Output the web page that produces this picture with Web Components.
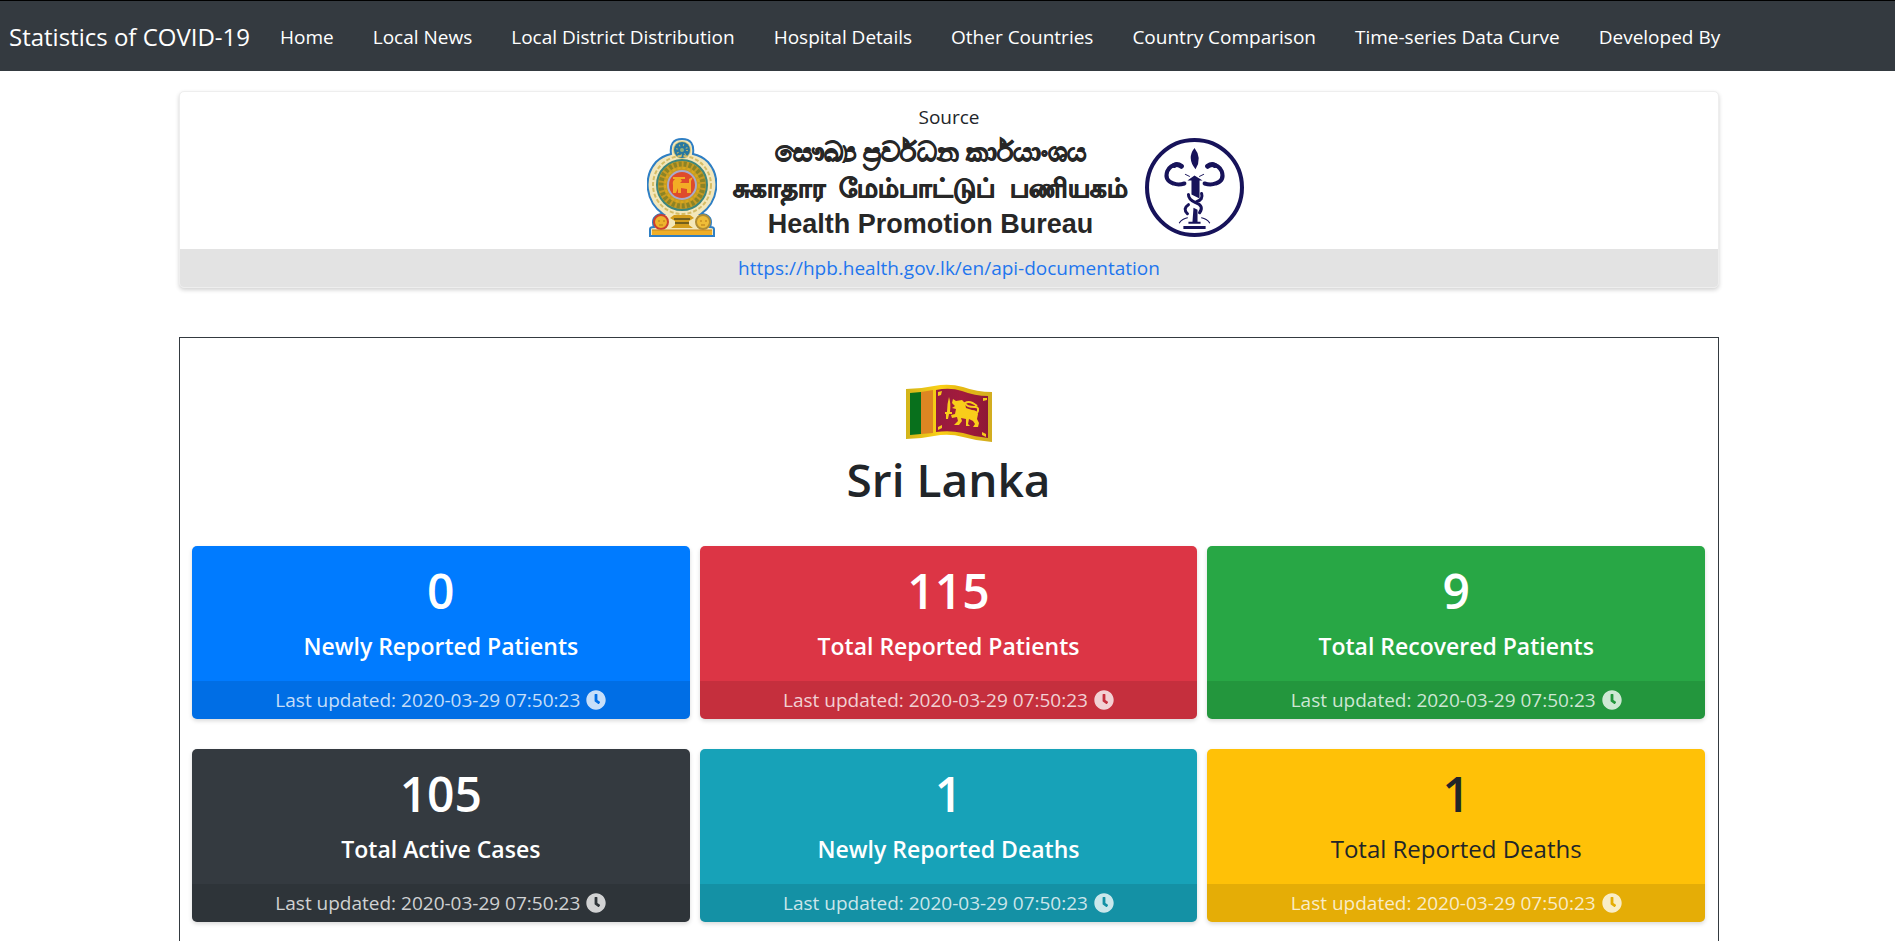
<!DOCTYPE html>
<html lang="en">
<head>
<meta charset="utf-8">
<meta name="viewport" content="width=device-width, initial-scale=1">
<title>Statistics of COVID-19</title>
<style>
  body { margin: 0; background: #fff; color: #212529; font: 19px/30px "Open Sans", "Noto Sans", sans-serif; }
</style>
</head>
<body>
<covid-page></covid-page>
<script>
const define = (name, html, setup) => {
  const template = document.createElement('template');
  template.innerHTML = html;
  customElements.define(name, class extends HTMLElement {
    constructor() {
      super();
      this.attachShadow({ mode: 'open' }).append(template.content.cloneNode(true));
    }
    connectedCallback() { if (setup) setup(this, this.shadowRoot); }
  });
};

define('nav-link', `
<style>
  :host { display: block; }
  a { color: #fff; text-decoration: none; white-space: nowrap; }
</style>
<a href="#"><slot></slot></a>`);

define('site-nav', `
<style>
  :host { display: block; background: #343a40; border-top: 1px solid #000; color: #fff; }
  nav { display: flex; align-items: center; gap: 30px; padding: 16px 9px 14px; }
  .brand { color: #fff; text-decoration: none; font-size: 24px; line-height: 40px; white-space: nowrap; }
  .links { display: flex; gap: 39px; }
</style>
<nav>
  <a class="brand" href="#"><slot name="brand"></slot></a>
  <div class="links"><slot></slot></div>
</nav>`);

define('state-emblem', `
<style>:host { display: block; } svg { display: block; }</style>
<svg width="70" height="99" viewBox="0 0 70 99" role="img" aria-label="Emblem of Sri Lanka">
  <g fill="#f3e7ba" stroke="#2f7fc4" stroke-width="2">
    <path d="M3 98V91Q3 89 7 89Q5 84 7 80Q10 76 16 76C-2 63-4 39 9 24Q15 18 24 16Q22 1 35 1Q48 1 46 16Q55 18 61 24C74 39 72 63 54 76Q60 76 63 80Q65 84 63 89Q67 89 67 91V98Z"/>
  </g>
  <circle cx="35" cy="12" r="9" fill="#d9c878"/>
  <circle cx="35" cy="12" r="8" fill="#2878a0"/>
  <circle cx="35" cy="12" r="5" fill="none" stroke="#b9b26a" stroke-width="2" stroke-dasharray="1 3"/>
  <circle cx="35" cy="12" r="2" fill="#8fae7c"/>
  <circle cx="35" cy="47" r="29" fill="none" stroke="#d6bd66" stroke-width="2" stroke-dasharray="4 2"/>
  <circle cx="35" cy="47" r="25" fill="#c79b24" stroke="#3d867c" stroke-width="2"/>
  <circle cx="35" cy="47" r="21" fill="none" stroke="#8c8425" stroke-width="5" stroke-dasharray="3 2"/>
  <circle cx="35" cy="47" r="17" fill="none" stroke="#d9a91b" stroke-width="2" stroke-dasharray="3 2"/>
  <circle cx="35" cy="47" r="14" fill="#df4b2b" stroke="#a8aacc" stroke-width="2"/>
  <path d="M26 55V47Q25 43 28 41L33 40 35 43 33 45 42 45V41L46 39 44 43V55H40V51L34 50V55H31V50L29 55ZM26 39H38V41H26Z" fill="#f3ad25"/>
  <path d="M27 77H43L47 80 42 83V87L46 90H24L28 87V83L23 80Z" fill="#d39d1c"/>
  <path d="M27 81H43M28 85H42" stroke="#73601d" stroke-width="2"/>
  <circle cx="14" cy="84" r="7" fill="#eeb32b" stroke="#cc3f30" stroke-width="2"/>
  <circle cx="56" cy="84" r="7" fill="#efbd38" stroke="#b08d35" stroke-width="2"/>
  <path d="M11 83h2m3 0h2M12 87h4M53 83h2m3 0h2M54 87h4" stroke="#b77917"/>
  <path d="M5 92H65V97H5Z" fill="#efae27"/>
  <path d="M5 92H65" stroke="#c48623"/>
</svg>`);

define('bureau-seal', `
<style>:host { display: block; } svg { display: block; }</style>
<svg width="99" height="99" viewBox="0 0 98 98" role="img" aria-label="Health Promotion Bureau seal">
  <circle cx="49" cy="49" r="47" fill="#fff" stroke="#17135a" stroke-width="4"/>
  <g fill="none" stroke="#17135a" stroke-linecap="round">
    <path d="M34 27Q26 25 22 33Q19 42 28 45Q33 47 39 45" stroke-width="4"/>
    <path d="M64 27Q72 25 76 33Q79 42 70 45Q65 47 59 45" stroke-width="4"/>
    <path d="M29 27Q32 25 36 28M69 27Q66 25 62 28" stroke-width="5"/>
    <path d="M43 56Q43 61 50 64Q59 67 54 74M56 55Q58 61 51 63M43 66Q37 70 42 75" stroke-width="3"/>
    <path d="M34 84Q37 80 42 79M64 84Q61 80 56 79M40 36l4 2M58 36l-4 2" stroke-width="1"/>
  </g>
  <path d="M49 10Q57 20 50 31Q41 20 49 10ZM42 42L49 37 57 42H54V60L46 56V42ZM48 69L52 71V83H55V85H43V83H47ZM38 87H60V90H38Z" fill="#17135a"/>
</svg>`);

define('source-card', `
<style>
  :host { display: block; background: #fff; border: 1px solid #eee; border-radius: 5px; box-shadow: 0 2px 4px rgba(0,0,0,.18); box-sizing: border-box; text-align: center; overflow: hidden; }
  .body { padding: 10px 0 12px; }
  .logo { display: flex; justify-content: center; align-items: center; gap: 18px; height: 99px; margin-top: 6px; padding-right: 8px; }
  .names { color: #272727; font: bold 27px/36px "Liberation Sans", "Noto Sans", sans-serif; width: 392px; display: flex; flex-direction: column; align-items: center; white-space: pre; }
  .names [lang] { -webkit-text-stroke: 1px currentColor; }
  .ta { font-size: 26px; }
  footer { background: #e3e3e3; padding: 4px 0; }
  a { color: #1f76ee; text-decoration: none; }
</style>
<div class="body">
  <div><slot></slot></div>
  <div class="logo">
    <state-emblem></state-emblem>
    <div class="names"><div lang="si">සෞඛ්‍ය ප්‍රවර්&zwnj;ධන කාර්&zwnj;යාංශය</div><div class="ta" lang="ta">சுகாதார  மேம்பாட்டுப்  பணியகம்</div><div>Health Promotion Bureau</div></div>
    <bureau-seal></bureau-seal>
  </div>
</div>
<footer><a href="https://hpb.health.gov.lk/en/api-documentation">https://hpb.health.gov.lk/en/api-documentation</a></footer>`);

define('lanka-flag', `
<style>:host { display: block; } svg { display: block; margin: 0 auto; }</style>
<svg width="88" height="58" viewBox="0 0 88 58" role="img" aria-label="Flag of Sri Lanka">
  <defs>
    <linearGradient id="gold"><stop stop-color="#d2b41a"/><stop offset=".4" stop-color="#fbd116"/><stop offset=".6" stop-color="#e9bb12"/><stop offset="1" stop-color="#d2ad20"/></linearGradient>
    <linearGradient id="red"><stop stop-color="#961a3e"/><stop offset=".5" stop-color="#a31b3c"/><stop offset="1" stop-color="#8d1736"/></linearGradient>
  </defs>
  <path d="M1 5Q15 5 29 2Q44-1 58 3Q72 8 87 8V58Q72 57 58 53Q44 49 29 52Q15 55 1 55Z" fill="url(#gold)"/>
  <path d="M5 9L16 8V50L5 51Z" fill="#08701c"/>
  <path d="M16 8L28 6V49L16 50Z" fill="#dd8622"/>
  <path d="M31 6Q45 3 57 7Q70 12 83 12V54Q70 53 58 49Q45 46 31 48Z" fill="url(#red)"/>
  <path d="M33 8l4-1-1 4-3 1zM78 14l4 0v2l-4 1zM33 43l4-2v3l-4 2zM77 48l4 2v3l-4-2z" fill="#f6c91c"/>
  <path d="M44 13Q46 19 45 28H47V30H44L43 35H41V30H40V28H42Q42 20 44 13Z" fill="#f9cd1a"/>
  <path d="M48 15L51 17 57 16 60 19 61 24 67 26Q72 26 73 30L72 35 74 39 73 43H68L70 40 68 37 64 35 63 40 65 42H61L61 35 56 34 57 37 54 41H49L53 37 52 33 47 34 46 31 50 30 51 25 47 24 50 22 47 19Z" fill="#f9cd1a"/>
  <path d="M72 29Q75 23 70 23Q61 23 60 19Q65 16 72 22" fill="none" stroke="#f9cd1a" stroke-width="2"/>
</svg>`);

define('stat-card', `
<style>
  :host { display: block; border-radius: 5px; box-shadow: 0 2px 4px rgba(0,0,0,.15); color: #fff; background: var(--tone); text-align: center; overflow: hidden; }
  :host([tone=blue]) { --tone: #007bff; }
  :host([tone=red]) { --tone: #dc3545; }
  :host([tone=green]) { --tone: #28a745; }
  :host([tone=dark]) { --tone: #343a40; }
  :host([tone=teal]) { --tone: #17a2b8; }
  :host([tone=yellow]) { --tone: #ffc107; }
  .body { padding: 15px 10px 20px; }
  h2 { margin: 0 0 10px; font-size: 48px; line-height: 60px; font-weight: 600; }
  h3 { margin: 0; font-size: 23px; line-height: 30px; font-weight: 600; }
  :host([tone=yellow]) .body { color: #212529; }
  :host([tone=yellow]) h3 { font-size: 24px; font-weight: 400; }
  footer { display: flex; justify-content: center; align-items: center; gap: 6px; padding: 4px 0; background: rgba(0,0,0,.1); color: rgba(255,255,255,.78); white-space: nowrap; }
  svg { width: 20px; height: 20px; fill: currentColor; }
</style>
<div class="body"><h2></h2><h3><slot></slot></h3></div>
<footer>
  <span>Last updated: 2020-03-29 07:50:23</span>
  <svg viewBox="0 0 512 512" aria-hidden="true"><path d="M256 8C119 8 8 119 8 256s111 248 248 248 248-111 248-248S393 8 256 8zm57 350l-88-64c-3-2-5-6-5-10V116c0-7 5-12 12-12h48c7 0 12 5 12 12v138l64 47c5 4 6 11 2 16l-28 39c-4 6-12 6-17 2z"/></svg>
</footer>`, (host, root) => { root.querySelector('h2').textContent = host.getAttribute('value'); });

define('country-panel', `
<style>
  :host { display: block; box-sizing: border-box; border: 1px solid #343a40; padding: 46px 13px 30px 12px; }
  h1 { margin: 7px 0 37px; text-align: center; font-size: 46px; line-height: 60px; font-weight: 600; }
  .grid { display: grid; grid-template-columns: repeat(3, 1fr); gap: 30px 10px; }
</style>
<lanka-flag></lanka-flag>
<h1><slot name="title"></slot></h1>
<div class="grid"><slot></slot></div>`);

define('covid-page', `
<style>
  :host { display: block; }
  main { padding: 20px 0 50px 3px; }
  .container { max-width: 1540px; margin: 0 auto; display: grid; gap: 49px; }
</style>
<site-nav>
  <span slot="brand">Statistics of COVID-19</span>
  <nav-link>Home</nav-link>
  <nav-link>Local News</nav-link>
  <nav-link>Local District Distribution</nav-link>
  <nav-link>Hospital Details</nav-link>
  <nav-link>Other Countries</nav-link>
  <nav-link>Country Comparison</nav-link>
  <nav-link>Time-series Data Curve</nav-link>
  <nav-link>Developed By</nav-link>
</site-nav>
<main>
  <div class="container">
    <source-card>Source</source-card>
    <country-panel>
      <span slot="title">Sri Lanka</span>
      <stat-card tone="blue" value="0">Newly Reported Patients</stat-card>
      <stat-card tone="red" value="115">Total Reported Patients</stat-card>
      <stat-card tone="green" value="9">Total Recovered Patients</stat-card>
      <stat-card tone="dark" value="105">Total Active Cases</stat-card>
      <stat-card tone="teal" value="1">Newly Reported Deaths</stat-card>
      <stat-card tone="yellow" value="1">Total Reported Deaths</stat-card>
    </country-panel>
  </div>
</main>`);
</script>
</body>
</html>
